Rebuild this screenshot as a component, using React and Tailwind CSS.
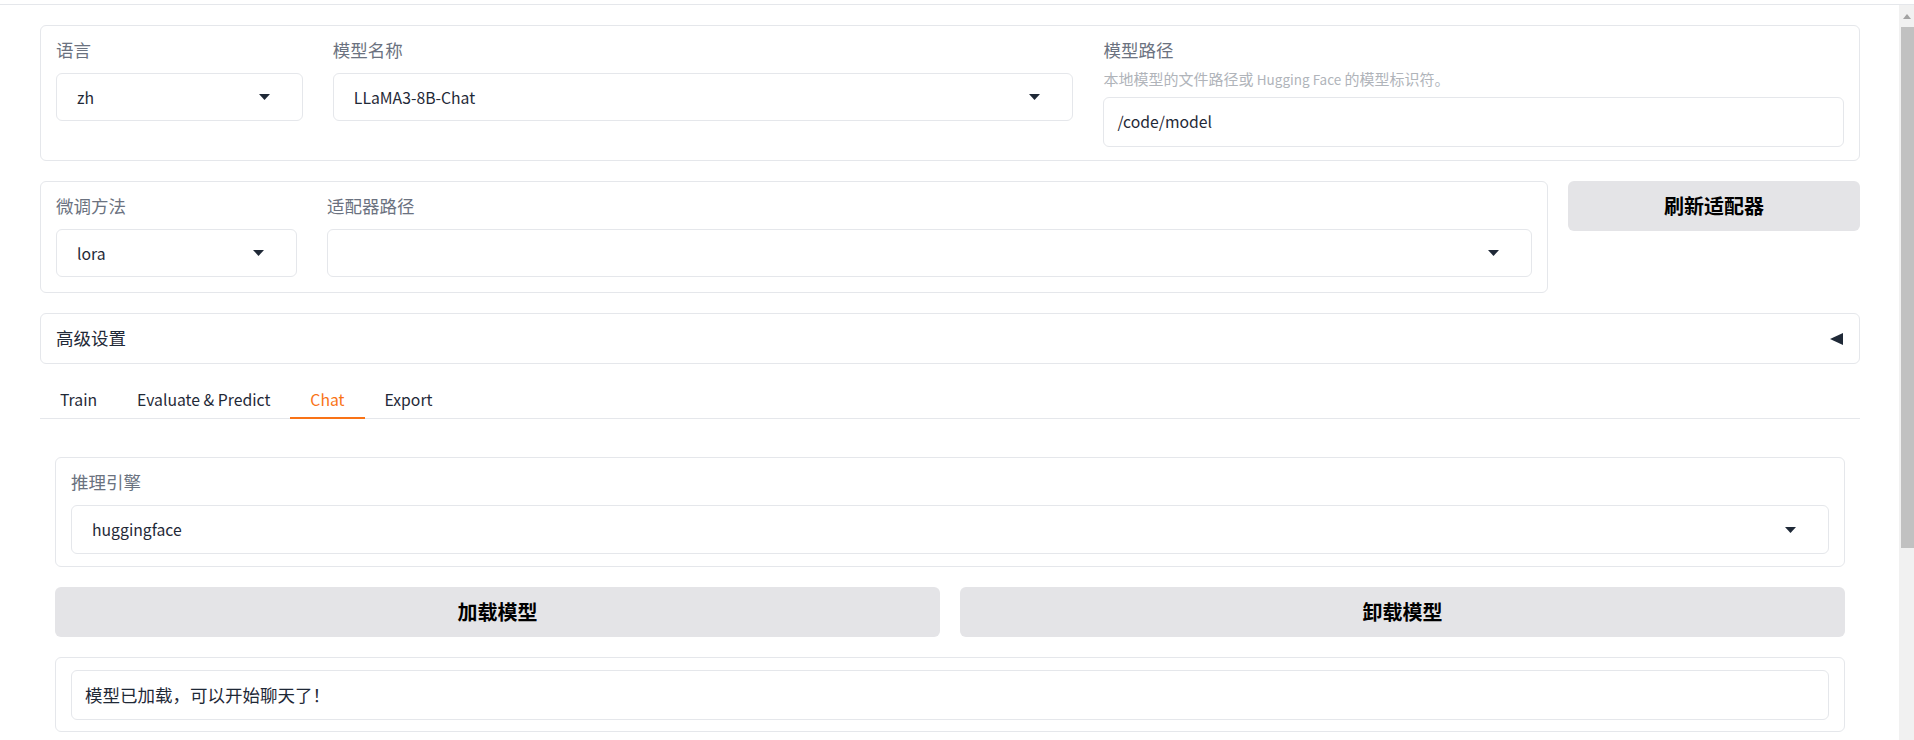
import React from "react";

const FONT = { fontFamily: '"Noto Sans CJK SC", "Noto Sans", sans-serif' };

function DownArrow() {
  return (
    <svg width="11" height="6" viewBox="0 0 11 6" className="shrink-0">
      <polygon points="0,0 11,0 5.5,6" fill="#1f2937" />
    </svg>
  );
}

function Label({ children }) {
  return <div className="text-[17.5px] leading-[25px] text-[#6b7280]">{children}</div>;
}

function Select({ value, h = "h-[48px]" }) {
  return (
    <div className={`${h} flex items-center justify-between pl-[20px] pr-[32px] border border-[#e5e7eb] rounded-[6px] bg-white`}>
      <span className="text-[15.75px] leading-[25px] text-[#1f2937]">{value}</span>
      <DownArrow />
    </div>
  );
}

export default function App() {
  return (
    <div className="w-[1914px] h-[740px] overflow-hidden bg-white flex flex-col" style={FONT}>
      <div className="h-[5px] shrink-0 border-b border-[#e5e7eb]" />
      <div className="flex flex-1 min-h-0">
        <div className="w-[1899px] pl-[40px] pr-[39px] pt-[20px]">
          {/* Row 1 */}
          <div className="border border-[#e5e7eb] rounded-[6px] px-[15px] pt-[11px] pb-[13px] grid grid-cols-[1fr_3fr_3fr] gap-[30px] items-start">
            <div>
              <Label>语言</Label>
              <div className="mt-[11px]">
                <Select value="zh" />
              </div>
            </div>
            <div>
              <Label>模型名称</Label>
              <div className="mt-[11px]">
                <Select value="LLaMA3-8B-Chat" />
              </div>
            </div>
            <div>
              <Label>模型路径</Label>
              <div className="mt-[7px] text-[15px] leading-[20px] text-[#b0b4ba]">
                本地模型的文件路径或 <span className="text-[13.5px]">Hugging Face</span> 的模型标识符。
              </div>
              <div className="mt-[8px] h-[50px] flex items-center px-[13px] border border-[#e5e7eb] rounded-[6px] text-[15.75px] text-[#1f2937]">
                /code/model
              </div>
            </div>
          </div>

          {/* Row 2 */}
          <div className="mt-[20px] flex gap-[20px] items-start">
            <div className="flex-1 border border-[#e5e7eb] rounded-[6px] px-[15px] pt-[11px] pb-[15px] grid grid-cols-[1fr_5fr] gap-[30px]">
              <div>
                <Label>微调方法</Label>
                <div className="mt-[11px]">
                  <Select value="lora" />
                </div>
              </div>
              <div>
                <Label>适配器路径</Label>
                <div className="mt-[11px]">
                  <Select value="" />
                </div>
              </div>
            </div>
            <button className="w-[292px] h-[50px] rounded-[6px] bg-[#e4e4e7] text-[20px] font-bold text-black">
              刷新适配器
            </button>
          </div>

          {/* Accordion */}
          <div className="mt-[20px] h-[51px] border border-[#e5e7eb] rounded-[6px] flex items-center justify-between pl-[15px] pr-[16px]">
            <span className="text-[17.5px] text-[#1f2937]">高级设置</span>
            <svg width="13" height="12" viewBox="0 0 13 12">
              <polygon points="13,0 13,12 0,6" fill="#1f2937" />
            </svg>
          </div>

          {/* Tabs */}
          <div className="mt-[19px] flex border-b border-[#e5e7eb]">
            {["Train", "Evaluate & Predict", "Chat", "Export"].map((t) => (
              <div
                key={t}
                className={
                  t === "Chat"
                    ? "h-[36px] -mb-px px-[20px] flex items-center border-b-2 border-[#f97316] text-[15.75px] text-[#f97316]"
                    : "h-[36px] -mb-px px-[20px] flex items-center border-b-2 border-transparent text-[15.75px] text-[#1f2937]"
                }
              >
                {t}
              </div>
            ))}
          </div>

          {/* Tab content */}
          <div className="px-[15px] pt-[38px]">
            <div className="border border-[#e5e7eb] rounded-[6px] px-[15px] pt-[11px] pb-[12px]">
              <Label>推理引擎</Label>
              <div className="mt-[11px]">
                <Select value="huggingface" h="h-[49px]" />
              </div>
            </div>
            <div className="mt-[20px] grid grid-cols-2 gap-[20px]">
              <button className="h-[50px] rounded-[6px] bg-[#e4e4e7] text-[20px] font-bold text-black">加载模型</button>
              <button className="h-[50px] rounded-[6px] bg-[#e4e4e7] text-[20px] font-bold text-black">卸载模型</button>
            </div>
            <div className="mt-[20px] border border-[#e5e7eb] rounded-[6px] px-[15px] pt-[12px] pb-[11px]">
              <div className="h-[50px] flex items-center px-[13px] border border-[#e5e7eb] rounded-[6px] text-[17.5px] text-[#1f2937]">
                模型已加载，可以开始聊天了！
              </div>
            </div>
          </div>
        </div>

        {/* Scrollbar */}
        <div className="w-[15px] bg-[#f1f1f1] flex flex-col">
          <div className="h-[22px] flex items-center justify-center">
            <svg width="8" height="5" viewBox="0 0 8 5">
              <polygon points="0,5 8,5 4,0" fill="#a3a3a3" />
            </svg>
          </div>
          <div className="ml-[2px] w-[13px] h-[521px] bg-[#c1c1c1]" />
        </div>
      </div>
    </div>
  );
}
